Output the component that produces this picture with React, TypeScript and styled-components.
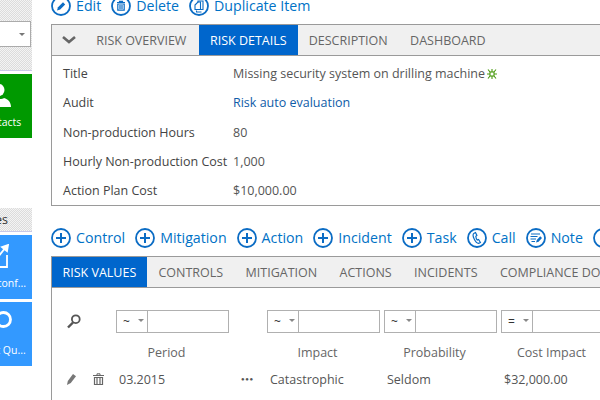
import React from 'react';
import styled, { createGlobalStyle } from 'styled-components';

const GlobalStyle = createGlobalStyle`
  html, body {
    margin: 0;
    padding: 0;
    background: #fff;
    overflow: hidden;
  }
  * {
    box-sizing: border-box;
  }
`;

const Page = styled.div`
  width: 600px;
  height: 400px;
  display: flex;
  gap: 19px;
  overflow: hidden;
  font-family: 'Open Sans', 'Noto Sans', sans-serif;
  font-size: 12px;
  color: #444;
`;

const Sidebar = styled.aside`
  width: 32px;
  flex: none;
  overflow: hidden;
`;

const Dither = styled.div`
  background-color: #ececec;
  background-image: repeating-conic-gradient(#dcdcdc 0% 25%, #f4f4f4 0% 50%);
  background-size: 2px 2px;
  border-bottom: 1px solid #c9c9e8;
`;

const SideFilter = styled(Dither)`
  height: 71px;
  padding-top: 21px;
`;

const SideSelect = styled.div`
  width: 42px;
  height: 26px;
  margin-left: -11px;
  background: #fff;
  border: 1px solid #ababab;
  display: flex;
  align-items: center;
  justify-content: flex-end;
  padding-right: 5px;
`;

const Caret = styled.span`
  width: 0;
  height: 0;
  border-left: 3px solid transparent;
  border-right: 3px solid transparent;
  border-top: 3px solid #777;
`;

const SideHeading = styled(Dither)`
  height: 24px;
  margin-top: 70px;
  display: flex;
  justify-content: flex-end;
  align-items: center;
  padding-right: 24px;
  white-space: nowrap;
  font-size: 12.5px;
  color: #333;
`;

const Tile = styled.div<{ $color: string; $top: number }>`
  width: 64px;
  height: 64px;
  margin-left: -32px;
  margin-top: ${(p) => p.$top}px;
  background: ${(p) => p.$color};
  color: #fff;
  display: flex;
  flex-direction: column;
  align-items: center;
  justify-content: flex-end;
  padding-bottom: 9px;
  font-size: 10.5px;
  white-space: nowrap;
`;

const TileIcon = styled.svg<{ $shift: number; $below: number }>`
  margin-left: ${(p) => p.$shift}px;
  margin-bottom: ${(p) => p.$below}px;
`;

const Main = styled.main`
  flex: 1;
  min-width: 0;
  overflow: hidden;
`;

const Toolbar = styled.div<{ $top: number }>`
  display: flex;
  width: 620px;
  height: 28px;
  margin-top: ${(p) => p.$top}px;
  gap: 10px;
`;

const ToolItem = styled.a`
  display: flex;
  align-items: flex-start;
  gap: 5px;
  height: 20px;
  color: #0072c6;
  font-size: 14.2px;
  line-height: 20px;
  white-space: nowrap;
  svg {
    flex: none;
  }
`;

const Panel = styled.section<{ $height: number }>`
  width: 620px;
  height: ${(p) => p.$height}px;
  border: 1px solid #9a9a9a;
`;

const TabBar = styled.div`
  display: flex;
  align-items: stretch;
  height: 31px;
  background: #f0f0f0;
  border-bottom: 1px solid #9a9a9a;
`;

const Collapse = styled.span`
  width: 33px;
  display: flex;
  align-items: center;
  padding-left: 10px;
`;

const Tab = styled.span<{ $active?: boolean }>`
  display: flex;
  align-items: center;
  padding: ${(p) => (p.$active ? '0 11px 0 10.5px' : '0 11.2px')};
  font-size: 12.5px;
  white-space: nowrap;
  color: ${(p) => (p.$active ? '#fff' : '#666')};
  background: ${(p) => (p.$active ? '#0066cc' : 'transparent')};
`;

const LeadTab = styled(Tab)`
  padding-right: 13px;
`;

const Rows = styled.div`
  padding-top: 3px;
`;

const Row = styled.div`
  display: grid;
  grid-template-columns: 170px 1fr;
  height: 29.25px;
  align-items: center;
  padding-left: 11px;
  font-size: 12.5px;
`;

const Value = styled.span`
  display: flex;
  align-items: center;
  gap: 2px;
  color: #555;
`;

const LinkValue = styled.a`
  color: #0f5ca8;
`;

const Grid = styled.div`
  display: grid;
  grid-template-columns: 64px 113px 38px 117px 117px 117px;
`;

const FilterGrid = styled(Grid)`
  margin-top: 22px;
  height: 23px;
`;

const ToolCell = styled.div`
  display: flex;
  align-items: center;
  padding-left: 15px;
  gap: 16px;
`;

const Filter = styled.div`
  display: flex;
  width: 113px;
  height: 23px;
  border: 1px solid #b0b0b0;
`;

const Operator = styled.div`
  width: 31px;
  flex: none;
  border-right: 1px solid #b0b0b0;
  display: flex;
  align-items: center;
  justify-content: space-between;
  padding: 0 3px 0 6px;
  color: #333;
  font-size: 12px;
  ${Caret} {
    border-top-color: #888;
    margin-bottom: 3px;
  }
`;

const HeadGrid = styled(Grid)`
  margin-top: 5px;
  height: 28px;
  align-items: center;
  color: #666;
  font-size: 12.5px;
`;

const Heading = styled.span<{ $span?: number }>`
  text-align: center;
  padding-right: ${(p) => p.$span ?? 16}px;
`;

const DataGrid = styled(Grid)`
  height: 26px;
  align-items: center;
  font-size: 12.5px;
  color: #555;
`;

const Cell = styled.span`
  padding-left: 3px;
`;

const Dots = styled.span`
  padding-left: 12px;
  font-size: 6px;
  letter-spacing: 0.6px;
  color: #555;
`;

const Ring: React.FC<{ children?: React.ReactNode }> = ({ children }) => (
  <svg width="20" height="20" viewBox="0 0 20 20" fill="none" stroke="#0b6cc4" strokeWidth="1.8">
    <circle cx="10" cy="10" r="9" />
    {children}
  </svg>
);

const PlusIcon = () => (
  <Ring>
    <path d="M10 5v10M5 10h10" strokeWidth="2" />
  </Ring>
);

const PencilIcon = () => (
  <Ring>
    <path d="M6 14.5l1-3.2 5-5 2.2 2.2-5 5z" fill="#0b6cc4" stroke="none" />
  </Ring>
);

const TrashIcon = () => (
  <Ring>
    <path d="M6 6.5h8M8.5 6.5V5.3h3v1.2" strokeWidth="1.2" />
    <path d="M6.8 8h6.4v6.2H6.8zM9 9v4M11 9v4" strokeWidth="1.2" />
  </Ring>
);

const CopyIcon = () => (
  <Ring>
    <path d="M6 9l3-3h2.5v7.5H6z" strokeWidth="1.1" />
    <path d="M9 6.5V5h5v8.5h-2.5M7.5 14.5V16h5" strokeWidth="1.1" />
  </Ring>
);

const PhoneIcon = () => (
  <Ring>
    <path
      d="M8.5 4.5L6.8 5.4C5.8 6.2 6 8.5 7.2 11c1.2 2.6 3 4.4 4.5 4.3l1.7-.9-1.8-2.9-1.3.6C9.5 11.2 8.9 9.8 8.8 8.2l1.1-.8z"
      strokeWidth="1.2"
    />
  </Ring>
);

const NoteIcon = () => (
  <Ring>
    <path d="M5 6h9M4.5 8.5h7M4.500 11h5.5M5.5 13.5h3.5" strokeWidth="1.2" />
    <path d="M10 14.5l.8-2.6 3.4-3.6 1.8 1.8-3.4 3.6z" fill="#0b6cc4" stroke="none" />
  </Ring>
);

const BugIcon = () => (
  <svg width="10" height="10" viewBox="0 0 10 10" fill="none" stroke="#4a9a10" strokeWidth="1.1">
    <rect x="3" y="3" width="4" height="4" />
    <path d="M1 .5l2 2.5M9 .5L7 3M1 9.5L3 7M9 9.5L7 7M0 5h3M7 5h3M5 0v3M5 7v3" />
  </svg>
);

const ChevronIcon = () => (
  <svg width="14" height="8" viewBox="0 0 14 8" fill="none" stroke="#666" strokeWidth="2.6">
    <path d="M1 1l6 5 6-5" />
  </svg>
);

const SearchIcon = () => (
  <svg width="14" height="15" viewBox="0 0 14 15" fill="none" stroke="#555" strokeWidth="1.8">
    <circle cx="8.8" cy="5.2" r="3.9" />
    <path d="M6 8.5l-5 5" strokeWidth="2.4" />
  </svg>
);

const SmallPencil = () => (
  <svg width="10" height="12" viewBox="0 0 10 12" fill="#777">
    <path d="M0 12l.8-4L6 1l3 2.2L3.8 10z" />
  </svg>
);

const SmallTrash = () => (
  <svg width="11" height="12" viewBox="0 0 11 12" fill="none" stroke="#666">
    <path d="M0 2.5h11M4 2.5V.8h3v1.7" />
    <path d="M1.5 4.5h8v7h-8zM4 5v6M7 5v6" strokeWidth="1.2" />
  </svg>
);

const PersonIcon = () => (
  <TileIcon $shift={-2} $below={8} width="24" height="23" viewBox="0 0 24 23" fill="#fff">
    <ellipse cx="12" cy="6" rx="5.5" ry="6" />
    <path d="M0 23c0-5 3-8 7-9 2 1.5 8 1.5 10 0 4 1 7 4 7 9z" />
  </TileIcon>
);

const ChartIcon = () => (
  <TileIcon $shift={-4} $below={8} width="24" height="24" viewBox="0 0 24 24" fill="none" stroke="#fff" strokeWidth="1.8">
    <path d="M21 11v12H2V9h12" />
    <path d="M8 18L20 3" />
    <path d="M16 3l6-2-1 6z" fill="#fff" />
  </TileIcon>
);

const RingIcon = () => (
  <TileIcon $shift={6} $below={15} width="17" height="17" viewBox="0 0 17 17" fill="none" stroke="#fff" strokeWidth="2.8">
    <circle cx="8.5" cy="8.5" r="7" />
  </TileIcon>
);

const topActions = [
  { label: 'Edit', icon: <PencilIcon /> },
  { label: 'Delete', icon: <TrashIcon /> },
  { label: 'Duplicate Item', icon: <CopyIcon /> },
];

const addActions = [
  { label: 'Control', icon: <PlusIcon /> },
  { label: 'Mitigation', icon: <PlusIcon /> },
  { label: 'Action', icon: <PlusIcon /> },
  { label: 'Incident', icon: <PlusIcon /> },
  { label: 'Task', icon: <PlusIcon /> },
  { label: 'Call', icon: <PhoneIcon /> },
  { label: 'Note', icon: <NoteIcon /> },
  { label: 'Email', icon: <Ring /> },
];

const valueTabs = ['CONTROLS', 'MITIGATION', 'ACTIONS', 'INCIDENTS', 'COMPLIANCE DOCUMENTS'];

const App: React.FC = () => (
  <Page>
    <GlobalStyle />
    <Sidebar>
      <SideFilter>
        <SideSelect>
          <Caret />
        </SideSelect>
      </SideFilter>
      <Tile $color="#009900" $top={3}>
        <PersonIcon />
        Contacts
      </Tile>
      <SideHeading>Favorites</SideHeading>
      <Tile $color="#3399ff" $top={3}>
        <ChartIcon />
        Risk conf...
      </Tile>
      <Tile $color="#3399ff" $top={3}>
        <RingIcon />
        Audit Qu...
      </Tile>
    </Sidebar>
    <Main>
      <Toolbar $top={-4}>
        {topActions.map((a) => (
          <ToolItem key={a.label}>
            {a.icon}
            {a.label}
          </ToolItem>
        ))}
      </Toolbar>
      <Panel $height={182}>
        <TabBar>
          <Collapse>
            <ChevronIcon />
          </Collapse>
          <LeadTab>RISK OVERVIEW</LeadTab>
          <Tab $active>RISK DETAILS</Tab>
          <Tab>DESCRIPTION</Tab>
          <Tab>DASHBOARD</Tab>
        </TabBar>
        <Rows>
          <Row>
            <span>Title</span>
            <Value>
              Missing security system on drilling machine <BugIcon />
            </Value>
          </Row>
          <Row>
            <span>Audit</span>
            <LinkValue>Risk auto evaluation</LinkValue>
          </Row>
          <Row>
            <span>Non-production Hours</span>
            <Value>80</Value>
          </Row>
          <Row>
            <span>Hourly Non-production Cost</span>
            <Value>1,000</Value>
          </Row>
          <Row>
            <span>Action Plan Cost</span>
            <Value>$10,000.00</Value>
          </Row>
        </Rows>
      </Panel>
      <Toolbar $top={22}>
        {addActions.map((a) => (
          <ToolItem key={a.label}>
            {a.icon}
            {a.label}
          </ToolItem>
        ))}
      </Toolbar>
      <Panel $height={160}>
        <TabBar>
          <Tab $active>RISK VALUES</Tab>
          {valueTabs.map((t) => (
            <Tab key={t}>{t}</Tab>
          ))}
        </TabBar>
        <FilterGrid>
          <ToolCell>
            <SearchIcon />
          </ToolCell>
          <Filter>
            <Operator>
              ~<Caret />
            </Operator>
          </Filter>
          <span />
          <Filter>
            <Operator>
              ~<Caret />
            </Operator>
          </Filter>
          <Filter>
            <Operator>
              ~<Caret />
            </Operator>
          </Filter>
          <Filter>
            <Operator>
              =<Caret />
            </Operator>
          </Filter>
        </FilterGrid>
        <HeadGrid>
          <span />
          <Heading $span={12}>Period</Heading>
          <span />
          <Heading>Impact</Heading>
          <Heading>Probability</Heading>
          <Heading>Cost Impact</Heading>
        </HeadGrid>
        <DataGrid>
          <ToolCell>
            <SmallPencil />
            <SmallTrash />
          </ToolCell>
          <Cell>03.2015</Cell>
          <Dots>●●●</Dots>
          <Cell>Catastrophic</Cell>
          <Cell>Seldom</Cell>
          <Cell>$32,000.00</Cell>
        </DataGrid>
      </Panel>
    </Main>
  </Page>
);

export default App;
